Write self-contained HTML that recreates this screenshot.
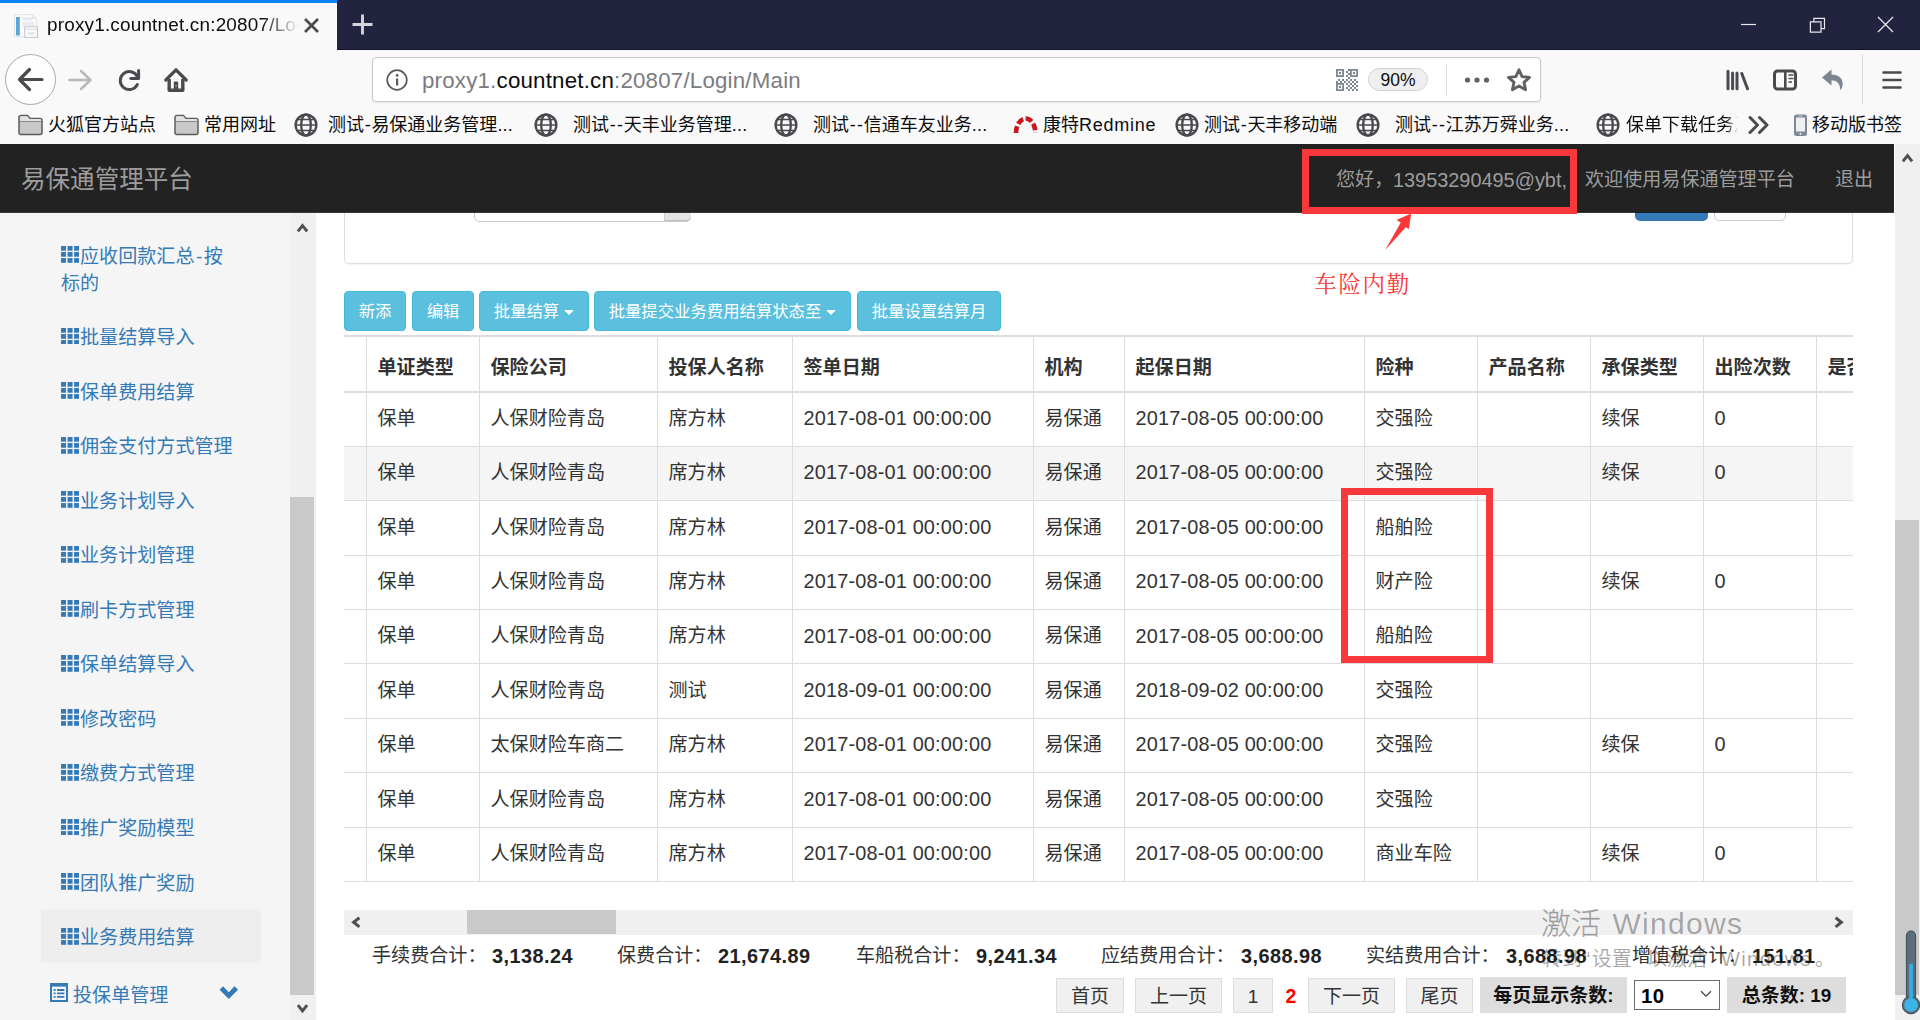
<!DOCTYPE html><html lang="zh-CN"><head><meta charset="utf-8"><title>proxy1.countnet.cn:20807/Login/Main</title>
<style>
*{box-sizing:border-box;margin:0;padding:0}
html,body{width:1920px;height:1020px;overflow:hidden;background:#fff}
body{position:relative;font-family:"Liberation Sans","Noto Sans CJK SC",sans-serif;color:#333;font-size:19.09px}
div,svg{position:absolute}
.t{white-space:nowrap}
.ser{font-family:"Liberation Serif","Noto Serif CJK SC",serif}
.btn{background:#5bc0de;border:1px solid #46b8da;border-radius:4px;color:#fff;font-size:16.36px;line-height:38px;text-align:center;white-space:nowrap}
.pg{background:#f0f0f0;border:1px solid #ddd;color:#333;font-size:19px;line-height:35px;text-align:center;white-space:nowrap}
.pgb{background:#ddd;color:#111;font-size:19px;font-weight:700;line-height:37px;text-align:center;white-space:nowrap}
.th{font-weight:700;color:#333;font-size:19.09px;line-height:26px;white-space:nowrap}
.td{color:#333;font-size:19.09px;line-height:26px;white-space:nowrap}
.sb{color:#337ab7;font-size:19.09px;line-height:27px;white-space:nowrap}
.hy{margin:0 .7px}.el{letter-spacing:.2px}
.bm{color:#0c0c0d;font-size:18px;line-height:26px;white-space:nowrap}
</style></head><body>
<div style="left:0px;top:0px;width:1920px;height:50px;background:#21233f;border-bottom:1px solid #10122a"></div>
<div style="left:0px;top:50px;width:1920px;height:94px;background:#f9f9fa"></div>
<div style="left:0px;top:0px;width:337px;height:50px;background:#f9f9fa"></div>
<div style="left:0px;top:0px;width:337px;height:3px;background:#0a84ff"></div>
<svg style="left:13px;top:13px" width="26" height="26" viewBox="13 13 26 26"><path d="M14.5 14.7 H32.5 L36.3 18.5 V36.8 H14.5 Z" fill="#fdfdfe" stroke="#dde1e6" stroke-width="1"/><path d="M32.5 14.7 V18.5 H36.3" fill="#f0f2f5" stroke="#d5dae0" stroke-width="0.8"/><rect x="16" y="17" width="3.8" height="18.5" fill="#5ca6da"/><rect x="22.5" y="17.2" width="9.5" height="3" fill="#e4e7eb"/><rect x="22.5" y="21.5" width="11.5" height="6" fill="#e8ebef"/><rect x="24.7" y="26.8" width="12.8" height="10.6" fill="#f9fafc" stroke="#c2c6cd" stroke-width="1"/><path d="M24.7 29.3 H37.5" stroke="#d3d7dd" stroke-width="0.9"/><rect x="28.2" y="32" width="6" height="2.6" fill="#e2e5ea"/></svg>
<div class="t" style="left:47px;top:11px;width:252px;height:30px;overflow:hidden;font-size:18.9px;line-height:28px;color:#0c0c0d;letter-spacing:.2px;-webkit-mask-image:linear-gradient(90deg,#000 0,#000 214px,rgba(0,0,0,0) 252px);mask-image:linear-gradient(90deg,#000 0,#000 214px,rgba(0,0,0,0) 252px)">proxy1.countnet.cn:20807/Login/Main</div>
<svg style="left:303px;top:17px" width="17" height="17" viewBox="0 0 17 17"><path d="M2 2 L15 15 M15 2 L2 15" stroke="#4a4a4f" stroke-width="2.7" fill="none"/></svg>
<svg style="left:351px;top:13px" width="23" height="23" viewBox="0 0 23 23"><path d="M11.5 1.5 V21.5 M1.5 11.5 H21.5" stroke="#d4d4dc" stroke-width="2.9" fill="none"/></svg>
<svg style="left:1741px;top:14px" width="160" height="24" viewBox="0 0 160 24"><path d="M0 10.5 H15" stroke="#e8e8ee" stroke-width="1.2" fill="none"/><path d="M69.4 7.8 h10.6 v10.4 h-10.6 z M72.9 7.8 v-3.5 h10.6 v10.4 h-3.5" stroke="#e8e8ee" stroke-width="1.2" fill="none"/><path d="M137 3 L152 18 M152 3 L137 18" stroke="#e8e8ee" stroke-width="1.3" fill="none"/></svg>
<div style="left:5px;top:54px;width:51px;height:51px;border-radius:50%;background:#fefefe;border:1px solid #a9a9ab"></div>
<svg style="left:17px;top:67px" width="27" height="25" viewBox="0 0 27 25"><path d="M25 12.5 H3.5 M12.5 2.5 L2.5 12.5 L12.5 22.5" stroke="#4a4a4f" stroke-width="3.2" fill="none" stroke-linecap="round" stroke-linejoin="round"/></svg>
<svg style="left:68px;top:69px" width="25" height="22" viewBox="0 0 25 22"><path d="M1.5 11 H22 M13 2 L22.5 11 L13 20" stroke="#b9b9bb" stroke-width="2.6" fill="none" stroke-linecap="round" stroke-linejoin="round"/></svg>
<svg style="left:116px;top:68px" width="26" height="24" viewBox="116 68 26 24"><path d="M137.3 76.5 A9 9 0 1 0 137.3 84.6" stroke="#4a4a4f" stroke-width="3" fill="none" stroke-linecap="round"/><path d="M130.8 78.5 H138.6 V70.5" stroke="#4a4a4f" stroke-width="3" fill="none" stroke-linecap="round" stroke-linejoin="round"/></svg>
<svg style="left:163px;top:66px" width="26" height="28" viewBox="163 66 26 28"><path d="M165.8 80 L176 69.8 L186.2 80" stroke="#4a4a4f" stroke-width="3.2" fill="none" stroke-linecap="round" stroke-linejoin="round"/><path d="M169.2 79 V90.3 H182.8 V79" stroke="#4a4a4f" stroke-width="3.4" fill="none" stroke-linejoin="round"/><path d="M173.8 90 V82.5 a1 1 0 0 1 1 -1 h2.4 a1 1 0 0 1 1 1 V90 Z" fill="#4a4a4f"/><rect x="175.6" y="85.2" width="1" height="1.3" fill="#ddd"/></svg>
<div style="left:372px;top:57px;width:1169px;height:45px;background:#fff;border:1px solid #c9c9cc;border-radius:4px;box-shadow:0 1px 2px rgba(0,0,0,.08)"></div>
<svg style="left:385px;top:68px" width="24" height="24" viewBox="0 0 24 24"><circle cx="12" cy="12" r="9.8" stroke="#5a5a5e" stroke-width="1.7" fill="none"/><rect x="11" y="10.5" width="2.2" height="7" fill="#5a5a5e"/><circle cx="12.1" cy="7.4" r="1.4" fill="#5a5a5e"/></svg>
<div class="t" style="left:422px;top:65px;font-size:22.3px;line-height:32px;color:#7b7b80;letter-spacing:.2px">proxy1.<span style="color:#0c0c0d">countnet.cn</span>:20807/Login/Main</div>
<svg style="left:1336px;top:69px" width="22" height="22" viewBox="0 0 22 22"><rect x="0.9" y="0.9" width="6.2" height="6.2" fill="none" stroke="#7d8792" stroke-width="1.8"/><rect x="2.9" y="2.9" width="2.2" height="2.2" fill="#7d8792"/><rect x="14.9" y="0.9" width="6.2" height="6.2" fill="none" stroke="#7d8792" stroke-width="1.8"/><rect x="16.9" y="2.9" width="2.2" height="2.2" fill="#7d8792"/><rect x="0.9" y="14.9" width="6.2" height="6.2" fill="none" stroke="#7d8792" stroke-width="1.8"/><rect x="2.9" y="16.9" width="2.2" height="2.2" fill="#7d8792"/><rect x="0" y="12" width="2" height="2" fill="#7d8792"/><rect x="2" y="10" width="2" height="2" fill="#7d8792"/><rect x="4" y="12" width="2" height="2" fill="#7d8792"/><rect x="6" y="10" width="2" height="2" fill="#7d8792"/><rect x="8" y="12" width="2" height="2" fill="#7d8792"/><rect x="10" y="2" width="2" height="2" fill="#7d8792"/><rect x="10" y="6" width="2" height="2" fill="#7d8792"/><rect x="10" y="10" width="2" height="2" fill="#7d8792"/><rect x="10" y="14" width="2" height="2" fill="#7d8792"/><rect x="10" y="18" width="2" height="2" fill="#7d8792"/><rect x="12" y="0" width="2" height="2" fill="#7d8792"/><rect x="12" y="4" width="2" height="2" fill="#7d8792"/><rect x="12" y="8" width="2" height="2" fill="#7d8792"/><rect x="12" y="12" width="2" height="2" fill="#7d8792"/><rect x="12" y="16" width="2" height="2" fill="#7d8792"/><rect x="12" y="20" width="2" height="2" fill="#7d8792"/><rect x="14" y="10" width="2" height="2" fill="#7d8792"/><rect x="14" y="14" width="2" height="2" fill="#7d8792"/><rect x="14" y="18" width="2" height="2" fill="#7d8792"/><rect x="16" y="12" width="2" height="2" fill="#7d8792"/><rect x="16" y="16" width="2" height="2" fill="#7d8792"/><rect x="16" y="20" width="2" height="2" fill="#7d8792"/><rect x="18" y="10" width="2" height="2" fill="#7d8792"/><rect x="18" y="14" width="2" height="2" fill="#7d8792"/><rect x="18" y="18" width="2" height="2" fill="#7d8792"/><rect x="20" y="12" width="2" height="2" fill="#7d8792"/><rect x="20" y="16" width="2" height="2" fill="#7d8792"/><rect x="20" y="20" width="2" height="2" fill="#7d8792"/></svg>
<div class="t" style="left:1368px;top:68px;width:60px;height:23px;background:#efeff1;border:1px solid #d2d2d5;border-radius:12px;font-size:17.5px;line-height:22px;text-align:center;color:#0c0c0d">90%</div>
<div style="left:1446px;top:64px;width:1px;height:32px;background:#dcdcde"></div>
<svg style="left:1464px;top:76px" width="26" height="8" viewBox="0 0 26 8" fill="#606064"><circle cx="3.5" cy="4" r="2.6"/><circle cx="13" cy="4" r="2.6"/><circle cx="22.5" cy="4" r="2.6"/></svg>
<svg style="left:1506px;top:67px" width="26" height="26" viewBox="0 0 26 26"><path d="M13 2.8 L16.1 9.6 L23.5 10.4 L18 15.4 L19.6 22.7 L13 19 L6.4 22.7 L8 15.4 L2.5 10.4 L9.9 9.6 Z" stroke="#606064" stroke-width="2.9" fill="none" stroke-linejoin="round"/></svg>
<svg style="left:1725px;top:68px" width="26" height="24" viewBox="1725 68 26 24" fill="none" stroke="#4a4a4f" stroke-width="3" stroke-linecap="round"><path d="M1728 71.2 V88.8 M1732.6 73 V88.8 M1737 73 V88.8 M1741.8 73.5 L1747.5 88.8"/></svg>
<svg style="left:1772px;top:69px" width="26" height="22" viewBox="0 0 26 22"><rect x="2.5" y="2" width="21" height="18" rx="3" stroke="#4a4a4f" stroke-width="3" fill="none"/><path d="M13.3 2 V20" stroke="#4a4a4f" stroke-width="2.6"/><path d="M16.5 6 H21.5 M16.5 9.5 H21.5 M16.5 13 H20" stroke="#4a4a4f" stroke-width="1.3"/></svg>
<svg style="left:1821px;top:68px" width="25" height="24" viewBox="0 0 25 24"><path d="M10.5 1.5 L1 9.5 L10.5 17.5 V12.5 C15.5 12.2 18.8 14.5 19.5 22.5 C24 16 22 6.8 10.5 6.5 Z" fill="#7b8593"/></svg>
<div style="left:1862px;top:54px;width:1px;height:50px;background:#d8d8da"></div>
<svg style="left:1882px;top:70px" width="20" height="20" viewBox="0 0 20 20" stroke="#4a4a4f" stroke-width="2.6" stroke-linecap="round"><path d="M1.5 2.5 H18.5 M1.5 10 H18.5 M1.5 17.5 H18.5"/></svg>
<svg style="left:18px;top:114px" width="25" height="22" viewBox="0 0 25 22"><path d="M1 3.5 a2 2 0 0 1 2 -2 h6.5 l2.5 3 h10 a2 2 0 0 1 2 2 v12 a2 2 0 0 1 -2 2 h-19 a2 2 0 0 1 -2 -2 z" fill="#c8c8c8" stroke="#5c5c5c" stroke-width="1.5"/><path d="M2 3.2 a1.2 1.2 0 0 1 1.2 -1 h6 l2.3 2.8 h10.5 a1.2 1.2 0 0 1 1.2 1.2 v1 H2 z" fill="#e2e2e2"/><path d="M1.5 7.5 H23.5" stroke="#8a8a8a" stroke-width="1"/></svg>
<div class="bm" style="left:48px;top:112px;line-height:26px;">火狐官方站点</div>
<svg style="left:174px;top:114px" width="25" height="22" viewBox="0 0 25 22"><path d="M1 3.5 a2 2 0 0 1 2 -2 h6.5 l2.5 3 h10 a2 2 0 0 1 2 2 v12 a2 2 0 0 1 -2 2 h-19 a2 2 0 0 1 -2 -2 z" fill="#c8c8c8" stroke="#5c5c5c" stroke-width="1.5"/><path d="M2 3.2 a1.2 1.2 0 0 1 1.2 -1 h6 l2.3 2.8 h10.5 a1.2 1.2 0 0 1 1.2 1.2 v1 H2 z" fill="#e2e2e2"/><path d="M1.5 7.5 H23.5" stroke="#8a8a8a" stroke-width="1"/></svg>
<div class="bm" style="left:204px;top:112px;line-height:26px;">常用网址</div>
<svg style="left:294px;top:113px" width="24" height="24" viewBox="0 0 24 24" fill="none" stroke="#48484d" stroke-width="2.3"><circle cx="12" cy="12" r="10.4"/><ellipse cx="12" cy="12" rx="4.8" ry="10.5"/><path d="M1.5 12 H22.5 M3 6.5 H21 M3 17.5 H21" stroke-width="1.6"/></svg>
<div class="bm" style="left:328px;top:112px;line-height:26px;">测试<span class="hy">-</span>易保通业务管理<span class="el">...</span></div>
<svg style="left:534px;top:113px" width="24" height="24" viewBox="0 0 24 24" fill="none" stroke="#48484d" stroke-width="2.3"><circle cx="12" cy="12" r="10.4"/><ellipse cx="12" cy="12" rx="4.8" ry="10.5"/><path d="M1.5 12 H22.5 M3 6.5 H21 M3 17.5 H21" stroke-width="1.6"/></svg>
<div class="bm" style="left:573px;top:112px;line-height:26px;">测试<span class="hy">-</span><span class="hy">-</span>天丰业务管理<span class="el">...</span></div>
<svg style="left:774px;top:113px" width="24" height="24" viewBox="0 0 24 24" fill="none" stroke="#48484d" stroke-width="2.3"><circle cx="12" cy="12" r="10.4"/><ellipse cx="12" cy="12" rx="4.8" ry="10.5"/><path d="M1.5 12 H22.5 M3 6.5 H21 M3 17.5 H21" stroke-width="1.6"/></svg>
<div class="bm" style="left:813px;top:112px;line-height:26px;">测试<span class="hy">-</span><span class="hy">-</span>信通车友业务<span class="el">...</span></div>
<svg style="left:1012px;top:114px" width="28" height="22" viewBox="1012 114 28 22" fill="none" stroke="#c9161d" stroke-width="4.6" stroke-dasharray="6.9 2.6"><path d="M1016 133 A9.7 14.5 0 0 1 1035.4 133"/></svg>
<div class="bm" style="left:1043px;top:112px;line-height:26px;">康特<span style="letter-spacing:.75px">Redmine</span></div>
<svg style="left:1175px;top:113px" width="24" height="24" viewBox="0 0 24 24" fill="none" stroke="#48484d" stroke-width="2.3"><circle cx="12" cy="12" r="10.4"/><ellipse cx="12" cy="12" rx="4.8" ry="10.5"/><path d="M1.5 12 H22.5 M3 6.5 H21 M3 17.5 H21" stroke-width="1.6"/></svg>
<div class="bm" style="left:1204px;top:112px;line-height:26px;">测试<span class="hy">-</span>天丰移动端</div>
<svg style="left:1356px;top:113px" width="24" height="24" viewBox="0 0 24 24" fill="none" stroke="#48484d" stroke-width="2.3"><circle cx="12" cy="12" r="10.4"/><ellipse cx="12" cy="12" rx="4.8" ry="10.5"/><path d="M1.5 12 H22.5 M3 6.5 H21 M3 17.5 H21" stroke-width="1.6"/></svg>
<div class="bm" style="left:1395px;top:112px;line-height:26px;">测试<span class="hy">-</span><span class="hy">-</span>江苏万舜业务<span class="el">...</span></div>
<svg style="left:1596px;top:113px" width="24" height="24" viewBox="0 0 24 24" fill="none" stroke="#48484d" stroke-width="2.3"><circle cx="12" cy="12" r="10.4"/><ellipse cx="12" cy="12" rx="4.8" ry="10.5"/><path d="M1.5 12 H22.5 M3 6.5 H21 M3 17.5 H21" stroke-width="1.6"/></svg>
<div class="bm" style="left:1626px;top:112px;width:112px;overflow:hidden;-webkit-mask-image:linear-gradient(90deg,#000 0,#000 100px,transparent 112px);mask-image:linear-gradient(90deg,#000 0,#000 100px,transparent 112px)">保单下载任务及</div>
<svg style="left:1748px;top:115px" width="22" height="20" viewBox="0 0 22 20" fill="none" stroke="#4a4a4f" stroke-width="3" stroke-linecap="round" stroke-linejoin="round"><path d="M2 2.5 L9.5 10 L2 17.5 M11.5 2.5 L19 10 L11.5 17.5"/></svg>
<svg style="left:1793px;top:113px" width="15" height="24" viewBox="0 0 15 24"><rect x="1" y="1.5" width="13" height="21.5" rx="2.5" fill="#7f8995"/><rect x="3" y="4.5" width="9" height="14" fill="#eef0f2"/><rect x="5.5" y="2.6" width="4" height="0.9" fill="#c5cad0"/><circle cx="7.5" cy="20.8" r="1.1" fill="#dfe3e7"/></svg>
<div class="bm" style="left:1812px;top:112px;line-height:26px;">移动版书签</div>
<div style="left:1895px;top:144px;width:25px;height:876px;background:#f0f0f0"></div>
<div style="left:1895px;top:520px;width:24px;height:475px;background:#c9c9c9"></div>
<svg style="left:1898px;top:149px" width="18" height="18" viewBox="1898 149 18 18"><path d="M1902.9 161.4 L1907.5 155.6 L1912.1 161.4" stroke="#505050" stroke-width="3" fill="none"/></svg>
<div style="left:316px;top:213px;width:1579px;height:807px;background:#fff"></div>
<div style="left:344px;top:200px;width:1509px;height:64px;border:1px solid #ddd;border-radius:5px;background:#fff;box-shadow:0 1px 1px rgba(0,0,0,.05)"></div>
<div style="left:474px;top:200px;width:217px;height:22px;border:1px solid #ccc;border-radius:0 0 5px 5px;background:#fff"></div>
<div style="left:664px;top:200px;width:27px;height:21px;background:#e4e4e4;border-left:1px solid #ccc;border-bottom:1px solid #bbb;border-radius:0 0 4px 0"></div>
<div style="left:1635px;top:200px;width:73px;height:21px;background:#337ab7;border-radius:0 0 5px 5px"></div>
<div style="left:1714px;top:200px;width:72px;height:21px;background:#fff;border:1px solid #ccc;border-radius:0 0 5px 5px"></div>
<div class="btn" style="left:344px;top:291px;width:62px;height:40px;">新添</div>
<div class="btn" style="left:412px;top:291px;width:62px;height:40px;">编辑</div>
<div class="btn" style="left:479px;top:291px;width:110px;height:40px;">批量结算<svg style="position:static;display:inline-block;margin-left:5px;vertical-align:middle" width="10" height="5" viewBox="0 0 10 5"><path d="M0 0 H10 L5 5 Z" fill="#fff"/></svg></div>
<div class="btn" style="left:594px;top:291px;width:257px;height:40px;">批量提交业务费用结算状态至<svg style="position:static;display:inline-block;margin-left:5px;vertical-align:middle" width="10" height="5" viewBox="0 0 10 5"><path d="M0 0 H10 L5 5 Z" fill="#fff"/></svg></div>
<div class="btn" style="left:857px;top:291px;width:144px;height:40px;">批量设置结算月</div>
<div style="left:344px;top:335px;width:1509px;height:560px;overflow:hidden">
<div style="left:0px;top:0px;width:1509px;height:2px;background:#ddd"></div>
<div style="left:0px;top:56px;width:1509px;height:2px;background:#ddd"></div>
<div style="left:0px;top:112px;width:1509px;height:53px;background:#f5f5f5"></div>
<div style="left:0px;top:111px;width:1509px;height:1px;background:#ddd"></div>
<div style="left:0px;top:165px;width:1509px;height:1px;background:#ddd"></div>
<div style="left:0px;top:220px;width:1509px;height:1px;background:#ddd"></div>
<div style="left:0px;top:274px;width:1509px;height:1px;background:#ddd"></div>
<div style="left:0px;top:328px;width:1509px;height:1px;background:#ddd"></div>
<div style="left:0px;top:383px;width:1509px;height:1px;background:#ddd"></div>
<div style="left:0px;top:437px;width:1509px;height:1px;background:#ddd"></div>
<div style="left:0px;top:492px;width:1509px;height:1px;background:#ddd"></div>
<div style="left:0px;top:546px;width:1509px;height:1px;background:#ddd"></div>
<div style="left:22px;top:2px;width:1px;height:544px;background:#ddd"></div>
<div style="left:135px;top:2px;width:1px;height:544px;background:#ddd"></div>
<div style="left:313px;top:2px;width:1px;height:544px;background:#ddd"></div>
<div style="left:448px;top:2px;width:1px;height:544px;background:#ddd"></div>
<div style="left:689px;top:2px;width:1px;height:544px;background:#ddd"></div>
<div style="left:780px;top:2px;width:1px;height:544px;background:#ddd"></div>
<div style="left:1020px;top:2px;width:1px;height:544px;background:#ddd"></div>
<div style="left:1133px;top:2px;width:1px;height:544px;background:#ddd"></div>
<div style="left:1246px;top:2px;width:1px;height:544px;background:#ddd"></div>
<div style="left:1359px;top:2px;width:1px;height:544px;background:#ddd"></div>
<div style="left:1472px;top:2px;width:1px;height:544px;background:#ddd"></div>
<div class="th" style="left:33.5px;top:20px;line-height:26px;">单证类型</div>
<div class="th" style="left:146.5px;top:20px;line-height:26px;">保险公司</div>
<div class="th" style="left:324.5px;top:20px;line-height:26px;">投保人名称</div>
<div class="th" style="left:459.5px;top:20px;line-height:26px;">签单日期</div>
<div class="th" style="left:700.5px;top:20px;line-height:26px;">机构</div>
<div class="th" style="left:791.5px;top:20px;line-height:26px;">起保日期</div>
<div class="th" style="left:1031.5px;top:20px;line-height:26px;">险种</div>
<div class="th" style="left:1144.5px;top:20px;line-height:26px;">产品名称</div>
<div class="th" style="left:1257.5px;top:20px;line-height:26px;">承保类型</div>
<div class="th" style="left:1370.5px;top:20px;line-height:26px;">出险次数</div>
<div class="th" style="left:1483.5px;top:20px;line-height:26px;">是否</div>
<div class="td" style="left:33.5px;top:70.9px;line-height:26px;">保单</div>
<div class="td" style="left:146.5px;top:70.9px;line-height:26px;">人保财险青岛</div>
<div class="td" style="left:324.5px;top:70.9px;line-height:26px;">席方林</div>
<div class="td" style="left:459.5px;top:70.1px;line-height:26px;font-size:19.9px;letter-spacing:0.17px;">2017-08-01 00:00:00</div>
<div class="td" style="left:700.5px;top:70.9px;line-height:26px;">易保通</div>
<div class="td" style="left:791.5px;top:70.1px;line-height:26px;font-size:19.9px;letter-spacing:0.17px;">2017-08-05 00:00:00</div>
<div class="td" style="left:1031.5px;top:70.9px;line-height:26px;">交强险</div>
<div class="td" style="left:1257.5px;top:70.9px;line-height:26px;">续保</div>
<div class="td" style="left:1370.5px;top:70.1px;line-height:26px;font-size:19.9px;letter-spacing:0.17px;">0</div>
<div class="td" style="left:33.5px;top:125.27px;line-height:26px;">保单</div>
<div class="td" style="left:146.5px;top:125.27px;line-height:26px;">人保财险青岛</div>
<div class="td" style="left:324.5px;top:125.27px;line-height:26px;">席方林</div>
<div class="td" style="left:459.5px;top:124.47px;line-height:26px;font-size:19.9px;letter-spacing:0.17px;">2017-08-01 00:00:00</div>
<div class="td" style="left:700.5px;top:125.27px;line-height:26px;">易保通</div>
<div class="td" style="left:791.5px;top:124.47px;line-height:26px;font-size:19.9px;letter-spacing:0.17px;">2017-08-05 00:00:00</div>
<div class="td" style="left:1031.5px;top:125.27px;line-height:26px;">交强险</div>
<div class="td" style="left:1257.5px;top:125.27px;line-height:26px;">续保</div>
<div class="td" style="left:1370.5px;top:124.47px;line-height:26px;font-size:19.9px;letter-spacing:0.17px;">0</div>
<div class="td" style="left:33.5px;top:179.65px;line-height:26px;">保单</div>
<div class="td" style="left:146.5px;top:179.65px;line-height:26px;">人保财险青岛</div>
<div class="td" style="left:324.5px;top:179.65px;line-height:26px;">席方林</div>
<div class="td" style="left:459.5px;top:178.85px;line-height:26px;font-size:19.9px;letter-spacing:0.17px;">2017-08-01 00:00:00</div>
<div class="td" style="left:700.5px;top:179.65px;line-height:26px;">易保通</div>
<div class="td" style="left:791.5px;top:178.85px;line-height:26px;font-size:19.9px;letter-spacing:0.17px;">2017-08-05 00:00:00</div>
<div class="td" style="left:1031.5px;top:179.65px;line-height:26px;">船舶险</div>
<div class="td" style="left:33.5px;top:234.02px;line-height:26px;">保单</div>
<div class="td" style="left:146.5px;top:234.02px;line-height:26px;">人保财险青岛</div>
<div class="td" style="left:324.5px;top:234.02px;line-height:26px;">席方林</div>
<div class="td" style="left:459.5px;top:233.22px;line-height:26px;font-size:19.9px;letter-spacing:0.17px;">2017-08-01 00:00:00</div>
<div class="td" style="left:700.5px;top:234.02px;line-height:26px;">易保通</div>
<div class="td" style="left:791.5px;top:233.22px;line-height:26px;font-size:19.9px;letter-spacing:0.17px;">2017-08-05 00:00:00</div>
<div class="td" style="left:1031.5px;top:234.02px;line-height:26px;">财产险</div>
<div class="td" style="left:1257.5px;top:234.02px;line-height:26px;">续保</div>
<div class="td" style="left:1370.5px;top:233.22px;line-height:26px;font-size:19.9px;letter-spacing:0.17px;">0</div>
<div class="td" style="left:33.5px;top:288.4px;line-height:26px;">保单</div>
<div class="td" style="left:146.5px;top:288.4px;line-height:26px;">人保财险青岛</div>
<div class="td" style="left:324.5px;top:288.4px;line-height:26px;">席方林</div>
<div class="td" style="left:459.5px;top:287.6px;line-height:26px;font-size:19.9px;letter-spacing:0.17px;">2017-08-01 00:00:00</div>
<div class="td" style="left:700.5px;top:288.4px;line-height:26px;">易保通</div>
<div class="td" style="left:791.5px;top:287.6px;line-height:26px;font-size:19.9px;letter-spacing:0.17px;">2017-08-05 00:00:00</div>
<div class="td" style="left:1031.5px;top:288.4px;line-height:26px;">船舶险</div>
<div class="td" style="left:33.5px;top:342.77px;line-height:26px;">保单</div>
<div class="td" style="left:146.5px;top:342.77px;line-height:26px;">人保财险青岛</div>
<div class="td" style="left:324.5px;top:342.77px;line-height:26px;">测试</div>
<div class="td" style="left:459.5px;top:341.97px;line-height:26px;font-size:19.9px;letter-spacing:0.17px;">2018-09-01 00:00:00</div>
<div class="td" style="left:700.5px;top:342.77px;line-height:26px;">易保通</div>
<div class="td" style="left:791.5px;top:341.97px;line-height:26px;font-size:19.9px;letter-spacing:0.17px;">2018-09-02 00:00:00</div>
<div class="td" style="left:1031.5px;top:342.77px;line-height:26px;">交强险</div>
<div class="td" style="left:33.5px;top:397.15px;line-height:26px;">保单</div>
<div class="td" style="left:146.5px;top:397.15px;line-height:26px;">太保财险车商二</div>
<div class="td" style="left:324.5px;top:397.15px;line-height:26px;">席方林</div>
<div class="td" style="left:459.5px;top:396.35px;line-height:26px;font-size:19.9px;letter-spacing:0.17px;">2017-08-01 00:00:00</div>
<div class="td" style="left:700.5px;top:397.15px;line-height:26px;">易保通</div>
<div class="td" style="left:791.5px;top:396.35px;line-height:26px;font-size:19.9px;letter-spacing:0.17px;">2017-08-05 00:00:00</div>
<div class="td" style="left:1031.5px;top:397.15px;line-height:26px;">交强险</div>
<div class="td" style="left:1257.5px;top:397.15px;line-height:26px;">续保</div>
<div class="td" style="left:1370.5px;top:396.35px;line-height:26px;font-size:19.9px;letter-spacing:0.17px;">0</div>
<div class="td" style="left:33.5px;top:451.52px;line-height:26px;">保单</div>
<div class="td" style="left:146.5px;top:451.52px;line-height:26px;">人保财险青岛</div>
<div class="td" style="left:324.5px;top:451.52px;line-height:26px;">席方林</div>
<div class="td" style="left:459.5px;top:450.72px;line-height:26px;font-size:19.9px;letter-spacing:0.17px;">2017-08-01 00:00:00</div>
<div class="td" style="left:700.5px;top:451.52px;line-height:26px;">易保通</div>
<div class="td" style="left:791.5px;top:450.72px;line-height:26px;font-size:19.9px;letter-spacing:0.17px;">2017-08-05 00:00:00</div>
<div class="td" style="left:1031.5px;top:451.52px;line-height:26px;">交强险</div>
<div class="td" style="left:33.5px;top:505.9px;line-height:26px;">保单</div>
<div class="td" style="left:146.5px;top:505.9px;line-height:26px;">人保财险青岛</div>
<div class="td" style="left:324.5px;top:505.9px;line-height:26px;">席方林</div>
<div class="td" style="left:459.5px;top:505.1px;line-height:26px;font-size:19.9px;letter-spacing:0.17px;">2017-08-01 00:00:00</div>
<div class="td" style="left:700.5px;top:505.9px;line-height:26px;">易保通</div>
<div class="td" style="left:791.5px;top:505.1px;line-height:26px;font-size:19.9px;letter-spacing:0.17px;">2017-08-05 00:00:00</div>
<div class="td" style="left:1031.5px;top:505.9px;line-height:26px;">商业车险</div>
<div class="td" style="left:1257.5px;top:505.9px;line-height:26px;">续保</div>
<div class="td" style="left:1370.5px;top:505.1px;line-height:26px;font-size:19.9px;letter-spacing:0.17px;">0</div>
</div>
<div style="left:344px;top:910px;width:1509px;height:25px;background:#f0f0f0"></div>
<div style="left:467px;top:910px;width:149px;height:24px;background:#c9c9c9"></div>
<svg style="left:347px;top:913px" width="18" height="18" viewBox="347 913 18 18"><path d="M359.4 917.6999999999999 L353.6 922.3 L359.4 926.9" stroke="#505050" stroke-width="3" fill="none"/></svg>
<svg style="left:1829px;top:913px" width="18" height="18" viewBox="1829 913 18 18"><path d="M1835.6 917.6999999999999 L1841.4 922.3 L1835.6 926.9" stroke="#505050" stroke-width="3" fill="none"/></svg>
<div class="t" style="left:372px;top:943px;line-height:26px;font-size:19.09px;color:#333;">手续费合计：</div>
<div class="t" style="left:492px;top:943px;line-height:26px;font-size:19.9px;color:#222;font-weight:700;letter-spacing:0.45px;">3,138.24</div>
<div class="t" style="left:617px;top:943px;line-height:26px;font-size:19.09px;color:#333;">保费合计：</div>
<div class="t" style="left:718px;top:943px;line-height:26px;font-size:19.9px;color:#222;font-weight:700;letter-spacing:0.45px;">21,674.89</div>
<div class="t" style="left:856px;top:943px;line-height:26px;font-size:19.09px;color:#333;">车船税合计：</div>
<div class="t" style="left:976px;top:943px;line-height:26px;font-size:19.9px;color:#222;font-weight:700;letter-spacing:0.45px;">9,241.34</div>
<div class="t" style="left:1101px;top:943px;line-height:26px;font-size:19.09px;color:#333;">应结费用合计：</div>
<div class="t" style="left:1241px;top:943px;line-height:26px;font-size:19.9px;color:#222;font-weight:700;letter-spacing:0.45px;">3,688.98</div>
<div class="t" style="left:1366px;top:943px;line-height:26px;font-size:19.09px;color:#333;">实结费用合计：</div>
<div class="t" style="left:1506px;top:943px;line-height:26px;font-size:19.9px;color:#222;font-weight:700;letter-spacing:0.45px;">3,688.98</div>
<div class="t" style="left:1632px;top:943px;line-height:26px;font-size:19.09px;color:#333;">增值税合计：</div>
<div class="t" style="left:1752px;top:943px;line-height:26px;font-size:19.9px;color:#222;font-weight:700;letter-spacing:0.45px;">151.81</div>
<div class="pg" style="left:1056px;top:978px;width:68px;height:35px;">首页</div>
<div class="pg" style="left:1135px;top:978px;width:87px;height:35px;">上一页</div>
<div class="pg" style="left:1233px;top:978px;width:40px;height:35px;">1</div>
<div class="t" style="left:1276px;top:982.5px;line-height:26px;font-size:19.5px;color:#f00;font-weight:700;width:30px;text-align:center;">2</div>
<div class="pg" style="left:1308px;top:978px;width:87px;height:35px;">下一页</div>
<div class="pg" style="left:1406px;top:978px;width:67px;height:35px;">尾页</div>
<div class="pgb" style="left:1480px;top:977px;width:147px;height:36px;">每页显示条数:</div>
<div style="left:1634px;top:980px;width:86px;height:30px;background:#fff;border:1px solid #6b6b6b"></div>
<div class="t" style="left:1641px;top:982.5px;line-height:26px;font-size:20.3px;color:#000;font-weight:700;letter-spacing:.4px;">10</div>
<svg style="left:1700px;top:990px" width="12" height="8" viewBox="0 0 12 8"><path d="M1 1.2 L6 6.2 L11 1.2" stroke="#444" stroke-width="1.3" fill="none"/></svg>
<div class="pgb" style="left:1727px;top:977px;width:119px;height:36px;">总条数: 19</div>
<div style="left:0px;top:213px;width:290px;height:807px;background:#f5f5f5"></div>
<div style="left:290px;top:213px;width:26px;height:807px;background:#f0f0f0"></div>
<div style="left:290px;top:497px;width:24px;height:498px;background:#c9c9c9"></div>
<svg style="left:293px;top:219px" width="18" height="18" viewBox="293 219 18 18"><path d="M297.9 231.4 L302.5 225.6 L307.1 231.4" stroke="#505050" stroke-width="3" fill="none"/></svg>
<svg style="left:293px;top:999px" width="18" height="18" viewBox="293 999 18 18"><path d="M297.9 1005.1 L302.5 1010.9 L307.1 1005.1" stroke="#505050" stroke-width="3" fill="none"/></svg>
<div style="left:41px;top:909px;width:220px;height:54px;background:#eee"></div>
<svg style="left:61px;top:246.3px" width="18.2" height="16.9" viewBox="0 0 18.2 16.9" fill="#337ab7"><rect x="0" y="0" width="5" height="4.7"/><rect x="6.55" y="0" width="5" height="4.7"/><rect x="13.1" y="0" width="5" height="4.7"/><rect x="0" y="6.05" width="5" height="4.7"/><rect x="6.55" y="6.05" width="5" height="4.7"/><rect x="13.1" y="6.05" width="5" height="4.7"/><rect x="0" y="12.1" width="5" height="4.7"/><rect x="6.55" y="12.1" width="5" height="4.7"/><rect x="13.1" y="12.1" width="5" height="4.7"/></svg>
<div class="sb" style="left:80px;top:242.6px;line-height:27px;">应收回款汇总<span style="margin:0 1.5px">-</span>按</div>
<div class="sb" style="left:61px;top:269.9px;line-height:27px;">标的</div>
<svg style="left:61px;top:327.6px" width="18.2" height="16.9" viewBox="0 0 18.2 16.9" fill="#337ab7"><rect x="0" y="0" width="5" height="4.7"/><rect x="6.55" y="0" width="5" height="4.7"/><rect x="13.1" y="0" width="5" height="4.7"/><rect x="0" y="6.05" width="5" height="4.7"/><rect x="6.55" y="6.05" width="5" height="4.7"/><rect x="13.1" y="6.05" width="5" height="4.7"/><rect x="0" y="12.1" width="5" height="4.7"/><rect x="6.55" y="12.1" width="5" height="4.7"/><rect x="13.1" y="12.1" width="5" height="4.7"/></svg>
<div class="sb" style="left:80px;top:324px;line-height:27px;">批量结算导入</div>
<svg style="left:61px;top:382.15px" width="18.2" height="16.9" viewBox="0 0 18.2 16.9" fill="#337ab7"><rect x="0" y="0" width="5" height="4.7"/><rect x="6.55" y="0" width="5" height="4.7"/><rect x="13.1" y="0" width="5" height="4.7"/><rect x="0" y="6.05" width="5" height="4.7"/><rect x="6.55" y="6.05" width="5" height="4.7"/><rect x="13.1" y="6.05" width="5" height="4.7"/><rect x="0" y="12.1" width="5" height="4.7"/><rect x="6.55" y="12.1" width="5" height="4.7"/><rect x="13.1" y="12.1" width="5" height="4.7"/></svg>
<div class="sb" style="left:80px;top:378.55px;line-height:27px;">保单费用结算</div>
<svg style="left:61px;top:436.7px" width="18.2" height="16.9" viewBox="0 0 18.2 16.9" fill="#337ab7"><rect x="0" y="0" width="5" height="4.7"/><rect x="6.55" y="0" width="5" height="4.7"/><rect x="13.1" y="0" width="5" height="4.7"/><rect x="0" y="6.05" width="5" height="4.7"/><rect x="6.55" y="6.05" width="5" height="4.7"/><rect x="13.1" y="6.05" width="5" height="4.7"/><rect x="0" y="12.1" width="5" height="4.7"/><rect x="6.55" y="12.1" width="5" height="4.7"/><rect x="13.1" y="12.1" width="5" height="4.7"/></svg>
<div class="sb" style="left:80px;top:433.1px;line-height:27px;">佣金支付方式管理</div>
<svg style="left:61px;top:491.25px" width="18.2" height="16.9" viewBox="0 0 18.2 16.9" fill="#337ab7"><rect x="0" y="0" width="5" height="4.7"/><rect x="6.55" y="0" width="5" height="4.7"/><rect x="13.1" y="0" width="5" height="4.7"/><rect x="0" y="6.05" width="5" height="4.7"/><rect x="6.55" y="6.05" width="5" height="4.7"/><rect x="13.1" y="6.05" width="5" height="4.7"/><rect x="0" y="12.1" width="5" height="4.7"/><rect x="6.55" y="12.1" width="5" height="4.7"/><rect x="13.1" y="12.1" width="5" height="4.7"/></svg>
<div class="sb" style="left:80px;top:487.65px;line-height:27px;">业务计划导入</div>
<svg style="left:61px;top:545.8px" width="18.2" height="16.9" viewBox="0 0 18.2 16.9" fill="#337ab7"><rect x="0" y="0" width="5" height="4.7"/><rect x="6.55" y="0" width="5" height="4.7"/><rect x="13.1" y="0" width="5" height="4.7"/><rect x="0" y="6.05" width="5" height="4.7"/><rect x="6.55" y="6.05" width="5" height="4.7"/><rect x="13.1" y="6.05" width="5" height="4.7"/><rect x="0" y="12.1" width="5" height="4.7"/><rect x="6.55" y="12.1" width="5" height="4.7"/><rect x="13.1" y="12.1" width="5" height="4.7"/></svg>
<div class="sb" style="left:80px;top:542.2px;line-height:27px;">业务计划管理</div>
<svg style="left:61px;top:600.35px" width="18.2" height="16.9" viewBox="0 0 18.2 16.9" fill="#337ab7"><rect x="0" y="0" width="5" height="4.7"/><rect x="6.55" y="0" width="5" height="4.7"/><rect x="13.1" y="0" width="5" height="4.7"/><rect x="0" y="6.05" width="5" height="4.7"/><rect x="6.55" y="6.05" width="5" height="4.7"/><rect x="13.1" y="6.05" width="5" height="4.7"/><rect x="0" y="12.1" width="5" height="4.7"/><rect x="6.55" y="12.1" width="5" height="4.7"/><rect x="13.1" y="12.1" width="5" height="4.7"/></svg>
<div class="sb" style="left:80px;top:596.75px;line-height:27px;">刷卡方式管理</div>
<svg style="left:61px;top:654.9px" width="18.2" height="16.9" viewBox="0 0 18.2 16.9" fill="#337ab7"><rect x="0" y="0" width="5" height="4.7"/><rect x="6.55" y="0" width="5" height="4.7"/><rect x="13.1" y="0" width="5" height="4.7"/><rect x="0" y="6.05" width="5" height="4.7"/><rect x="6.55" y="6.05" width="5" height="4.7"/><rect x="13.1" y="6.05" width="5" height="4.7"/><rect x="0" y="12.1" width="5" height="4.7"/><rect x="6.55" y="12.1" width="5" height="4.7"/><rect x="13.1" y="12.1" width="5" height="4.7"/></svg>
<div class="sb" style="left:80px;top:651.3px;line-height:27px;">保单结算导入</div>
<svg style="left:61px;top:709.45px" width="18.2" height="16.9" viewBox="0 0 18.2 16.9" fill="#337ab7"><rect x="0" y="0" width="5" height="4.7"/><rect x="6.55" y="0" width="5" height="4.7"/><rect x="13.1" y="0" width="5" height="4.7"/><rect x="0" y="6.05" width="5" height="4.7"/><rect x="6.55" y="6.05" width="5" height="4.7"/><rect x="13.1" y="6.05" width="5" height="4.7"/><rect x="0" y="12.1" width="5" height="4.7"/><rect x="6.55" y="12.1" width="5" height="4.7"/><rect x="13.1" y="12.1" width="5" height="4.7"/></svg>
<div class="sb" style="left:80px;top:705.85px;line-height:27px;">修改密码</div>
<svg style="left:61px;top:764px" width="18.2" height="16.9" viewBox="0 0 18.2 16.9" fill="#337ab7"><rect x="0" y="0" width="5" height="4.7"/><rect x="6.55" y="0" width="5" height="4.7"/><rect x="13.1" y="0" width="5" height="4.7"/><rect x="0" y="6.05" width="5" height="4.7"/><rect x="6.55" y="6.05" width="5" height="4.7"/><rect x="13.1" y="6.05" width="5" height="4.7"/><rect x="0" y="12.1" width="5" height="4.7"/><rect x="6.55" y="12.1" width="5" height="4.7"/><rect x="13.1" y="12.1" width="5" height="4.7"/></svg>
<div class="sb" style="left:80px;top:760.4px;line-height:27px;">缴费方式管理</div>
<svg style="left:61px;top:818.55px" width="18.2" height="16.9" viewBox="0 0 18.2 16.9" fill="#337ab7"><rect x="0" y="0" width="5" height="4.7"/><rect x="6.55" y="0" width="5" height="4.7"/><rect x="13.1" y="0" width="5" height="4.7"/><rect x="0" y="6.05" width="5" height="4.7"/><rect x="6.55" y="6.05" width="5" height="4.7"/><rect x="13.1" y="6.05" width="5" height="4.7"/><rect x="0" y="12.1" width="5" height="4.7"/><rect x="6.55" y="12.1" width="5" height="4.7"/><rect x="13.1" y="12.1" width="5" height="4.7"/></svg>
<div class="sb" style="left:80px;top:814.95px;line-height:27px;">推广奖励模型</div>
<svg style="left:61px;top:873.1px" width="18.2" height="16.9" viewBox="0 0 18.2 16.9" fill="#337ab7"><rect x="0" y="0" width="5" height="4.7"/><rect x="6.55" y="0" width="5" height="4.7"/><rect x="13.1" y="0" width="5" height="4.7"/><rect x="0" y="6.05" width="5" height="4.7"/><rect x="6.55" y="6.05" width="5" height="4.7"/><rect x="13.1" y="6.05" width="5" height="4.7"/><rect x="0" y="12.1" width="5" height="4.7"/><rect x="6.55" y="12.1" width="5" height="4.7"/><rect x="13.1" y="12.1" width="5" height="4.7"/></svg>
<div class="sb" style="left:80px;top:869.5px;line-height:27px;">团队推广奖励</div>
<svg style="left:61px;top:927.65px" width="18.2" height="16.9" viewBox="0 0 18.2 16.9" fill="#337ab7"><rect x="0" y="0" width="5" height="4.7"/><rect x="6.55" y="0" width="5" height="4.7"/><rect x="13.1" y="0" width="5" height="4.7"/><rect x="0" y="6.05" width="5" height="4.7"/><rect x="6.55" y="6.05" width="5" height="4.7"/><rect x="13.1" y="6.05" width="5" height="4.7"/><rect x="0" y="12.1" width="5" height="4.7"/><rect x="6.55" y="12.1" width="5" height="4.7"/><rect x="13.1" y="12.1" width="5" height="4.7"/></svg>
<div class="sb" style="left:80px;top:924.05px;line-height:27px;">业务费用结算</div>
<svg style="left:50px;top:983px" width="18" height="19" viewBox="0 0 18 19"><rect x="1" y="1" width="16" height="17" fill="none" stroke="#337ab7" stroke-width="2"/><rect x="0" y="0" width="18" height="3.6" fill="#337ab7"/><path d="M3.6 7 H5.6 M7 7 H14.4 M3.6 10.4 H5.6 M7 10.4 H14.4 M3.6 13.8 H5.6 M7 13.8 H14.4" stroke="#337ab7" stroke-width="1.8"/></svg>
<div class="sb" style="left:73px;top:981.7px;line-height:27px;">投保单管理</div>
<svg style="left:218px;top:983px" width="22" height="18" viewBox="218 983 22 18"><path d="M221.3 988 L228.8 995.6 L236.3 988" stroke="#337ab7" stroke-width="4.8" fill="none"/></svg>
<div style="left:0px;top:144px;width:1894px;height:68px;background:#222;box-shadow:0 1px 0 rgba(8,8,8,.8)"></div>
<div class="t" style="left:21px;top:162.5px;line-height:34px;font-size:24.55px;color:#9d9d9d;">易保通管理平台</div>
<div class="t" style="left:1336px;top:166.5px;line-height:26px;font-size:19.09px;color:#9d9d9d;">您好，</div>
<div class="t" style="left:1393px;top:166.5px;line-height:26px;font-size:19.9px;color:#9d9d9d;">13953290495@ybt,</div>
<div class="t" style="left:1585px;top:166.5px;line-height:26px;font-size:19.09px;color:#9d9d9d;">欢迎使用易保通管理平台</div>
<div class="t" style="left:1835px;top:166.5px;line-height:26px;font-size:19.09px;color:#9d9d9d;">退出</div>
<div style="left:1302px;top:149px;width:275px;height:65px;border:7px solid #f8383a"></div>
<div style="left:1341px;top:488px;width:152px;height:175px;border:7px solid #f8383a"></div>
<svg style="left:1375px;top:205px" width="45" height="50" viewBox="1375 205 45 50"><path d="M1411.2 213.5 L1396.5 220 L1400.8 222.6 L1385.2 250 L1405.8 227.2 L1408.8 229 Z" fill="#f8383a"/></svg>
<div class="t ser" style="left:1314.3px;top:269.8px;line-height:30px;font-size:22.5px;color:#fb3636;letter-spacing:1.65px;">车险内勤</div>
<div class="t" style="left:1541px;top:903.5px;line-height:40px;font-size:30px;color:rgba(0,0,0,.32);font-weight:300;-webkit-text-stroke:.3px rgba(0,0,0,.32);">激活</div>
<div class="t" style="left:1612.5px;top:903.5px;line-height:40px;font-size:30px;color:rgba(0,0,0,.32);letter-spacing:1.3px;">Windows</div>
<div class="t" style="left:1542px;top:944.5px;line-height:28px;font-size:20px;color:rgba(0,0,0,.34);">转到<span style="margin:0 1.6px">“</span>设置<span style="margin:0 5.5px 0 3px">”</span>以激活</div>
<div class="t" style="left:1721px;top:944.5px;line-height:28px;font-size:20px;color:rgba(0,0,0,.36);letter-spacing:1.4px;">Windows</div>
<div class="t" style="left:1815px;top:944.5px;line-height:28px;font-size:20px;color:rgba(0,0,0,.36);">。</div>
<svg style="left:1899px;top:928px" width="21" height="90" viewBox="1899 928 21 90"><rect x="1906.5" y="931.2" width="9" height="72" rx="4.5" fill="#5f6e7c" stroke="#46535f" stroke-width="1.2"/><circle cx="1911" cy="1005" r="8.6" fill="#5f6e7c" stroke="#46535f" stroke-width="1.2"/><rect x="1909.2" y="964" width="3.7" height="36" fill="#2fb0ea"/><circle cx="1911" cy="1005" r="6.8" fill="#3ab6e6"/></svg>
</body></html>
